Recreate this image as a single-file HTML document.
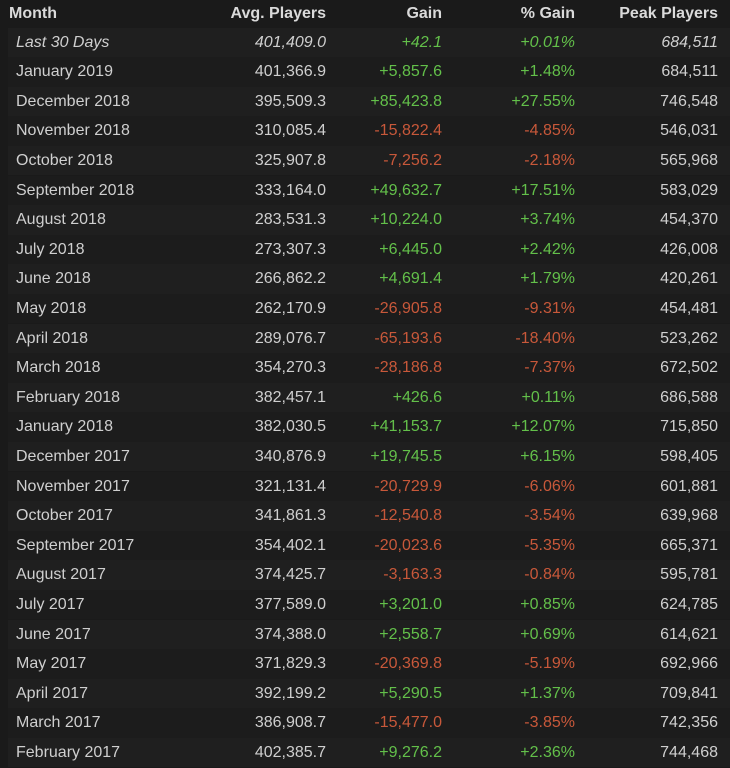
<!DOCTYPE html>
<html><head><style>
body{margin:0;background:#1a1a1a;width:730px;height:768px;overflow:hidden;font-family:"Liberation Sans",Arial,sans-serif;font-size:16px;color:#cfcfcf}
.r{position:absolute;left:8px;width:722px;height:29.6px;line-height:29.6px}
.r.o{background:#1f1f1f}
.r.e{background:#1c1c1c}
.r span{position:absolute;top:0}
.m{left:8px}.a{right:404px}.g{right:288px}.p{right:155px}.k{right:12px}
.h{font-weight:bold;color:#dadada;top:0;height:28px;line-height:28px}
.h .m{left:1px}
.i{font-style:italic}
.up{color:#63c04a}.dn{color:#c8583a}
</style></head><body>
<div class="r h" style="top:0"><span class="m">Month</span><span class="a">Avg. Players</span><span class="g">Gain</span><span class="p">% Gain</span><span class="k">Peak Players</span></div>
<div id="t"></div>
<script>
var d=[["Last 30 Days","401,409.0","+42.1","+0.01%","684,511"],
["January 2019","401,366.9","+5,857.6","+1.48%","684,511"],
["December 2018","395,509.3","+85,423.8","+27.55%","746,548"],
["November 2018","310,085.4","-15,822.4","-4.85%","546,031"],
["October 2018","325,907.8","-7,256.2","-2.18%","565,968"],
["September 2018","333,164.0","+49,632.7","+17.51%","583,029"],
["August 2018","283,531.3","+10,224.0","+3.74%","454,370"],
["July 2018","273,307.3","+6,445.0","+2.42%","426,008"],
["June 2018","266,862.2","+4,691.4","+1.79%","420,261"],
["May 2018","262,170.9","-26,905.8","-9.31%","454,481"],
["April 2018","289,076.7","-65,193.6","-18.40%","523,262"],
["March 2018","354,270.3","-28,186.8","-7.37%","672,502"],
["February 2018","382,457.1","+426.6","+0.11%","686,588"],
["January 2018","382,030.5","+41,153.7","+12.07%","715,850"],
["December 2017","340,876.9","+19,745.5","+6.15%","598,405"],
["November 2017","321,131.4","-20,729.9","-6.06%","601,881"],
["October 2017","341,861.3","-12,540.8","-3.54%","639,968"],
["September 2017","354,402.1","-20,023.6","-5.35%","665,371"],
["August 2017","374,425.7","-3,163.3","-0.84%","595,781"],
["July 2017","377,589.0","+3,201.0","+0.85%","624,785"],
["June 2017","374,388.0","+2,558.7","+0.69%","614,621"],
["May 2017","371,829.3","-20,369.8","-5.19%","692,966"],
["April 2017","392,199.2","+5,290.5","+1.37%","709,841"],
["March 2017","386,908.7","-15,477.0","-3.85%","742,356"],
["February 2017","402,385.7","+9,276.2","+2.36%","744,468"]];
var h="";
d.forEach(function(r,i){var c=r[2][0]=="+"?"up":"dn";var it=i==0?" i":"";
h+='<div class="r '+(i%2?'e':'o')+it+'" style="top:'+(27.5+i*29.6)+'px"><span class="m">'+r[0]+'</span><span class="a">'+r[1]+'</span><span class="g '+c+'">'+r[2]+'</span><span class="p '+c+'">'+r[3]+'</span><span class="k">'+r[4]+'</span></div>';});
document.getElementById("t").innerHTML=h;
</script>
</body></html>
